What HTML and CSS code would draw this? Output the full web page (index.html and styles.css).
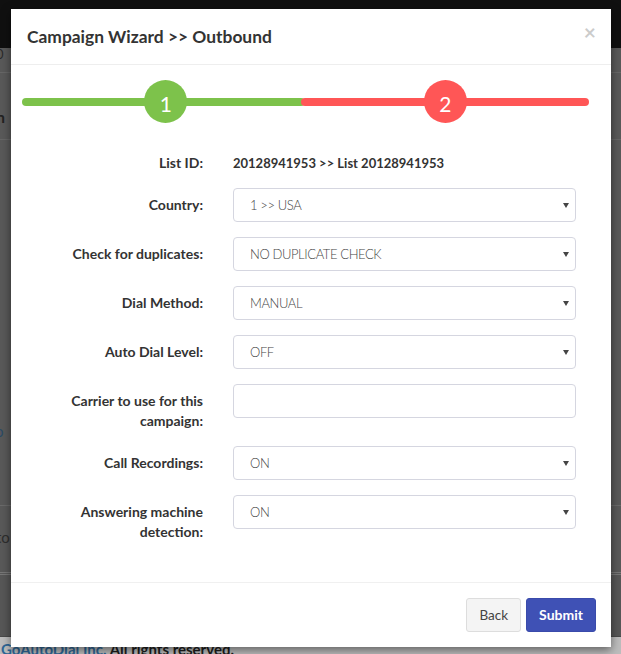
FILE: index.html
```html
<!DOCTYPE html>
<html lang="en">
<head>
<meta charset="utf-8">
<title>Campaign Wizard</title>
<link rel="stylesheet" href="styles.css">
</head>
<body>
<div class="page">
  <div class="topbar"></div>
  <div class="subhead">0</div>
  <div class="title-row"><span class="frag-bold">n</span></div>
  <div class="content"><span class="frag-link">o</span></div>
  <div class="table-foot"><span class="frag-text">to</span></div>
  <div class="pager"></div>
  <div class="site-footer"><span class="brand">GoAutoDial Inc.</span> All rights reserved.</div>
</div>

<div class="modal">
  <div class="modal-header">
    <h4 class="modal-title">Campaign Wizard &gt;&gt; Outbound</h4>
    <button class="close" type="button">×</button>
  </div>
  <div class="modal-body">
    <div class="stepper">
      <div class="track"><span class="track-done"></span><span class="track-todo"></span></div>
      <div class="steps">
        <span class="step step-done">1</span>
        <span class="step step-todo">2</span>
      </div>
    </div>
    <div class="form">
      <div class="label label-static">List ID:</div>
      <div class="value-static">20128941953 &gt;&gt; List 20128941953</div>

      <div class="label">Country:</div>
      <div class="select-wrap"><select class="control"><option>1 &gt;&gt; USA</option></select></div>

      <div class="label">Check for duplicates:</div>
      <div class="select-wrap"><select class="control"><option>NO DUPLICATE CHECK</option></select></div>

      <div class="label">Dial Method:</div>
      <div class="select-wrap"><select class="control"><option>MANUAL</option></select></div>

      <div class="label">Auto Dial Level:</div>
      <div class="select-wrap"><select class="control"><option>OFF</option></select></div>

      <div class="label">Carrier to use for this campaign:</div>
      <div><input class="control" type="text"></div>

      <div class="label">Call Recordings:</div>
      <div class="select-wrap"><select class="control"><option>ON</option></select></div>

      <div class="label">Answering machine detection:</div>
      <div class="select-wrap"><select class="control"><option>ON</option></select></div>
    </div>
  </div>
  <div class="modal-footer">
    <button class="btn btn-back" type="button">Back</button>
    <button class="btn btn-submit" type="button">Submit</button>
  </div>
</div>
</body>
</html>
```

FILE: styles.css
```css
* { box-sizing: border-box; }
html, body { margin: 0; height: 100%; }
body {
  font-family: Lato, "Liberation Sans", sans-serif;
  font-size: 14px;
  color: #333;
  background: #595959;
  overflow: hidden;
  position: relative;
}

/* dimmed page behind the dialog */
.page { display: flex; flex-direction: column; height: 654px; }
.topbar { flex: none; height: 48px; background: #101010; }
.subhead {
  flex: none; height: 25px; border-bottom: 1px solid #666;
  color: #2a2a2a; font-size: 13px; line-height: 10px; padding-top: 1px; margin-left: -4px;
}
.title-row {
  flex: none; height: 67px; border-bottom: 1px solid #666;
  padding-top: 34px; margin-left: -4px;
}
.frag-bold { font-weight: 700; font-size: 16px; color: #222; }
.content { flex: none; height: 366px; border-bottom: 1px solid #6a6a6a; padding-top: 282px; margin-left: -5px; }
.frag-link { color: #2b4a66; font-size: 15px; }
.table-foot { flex: none; height: 69px; border-bottom: 3px double #777; padding-top: 22px; margin-left: -4px; }
.frag-text { color: #2e2e2e; font-size: 15px; }
.pager { flex: none; height: 62px; background: #575757; border-bottom: 1px solid #4a4a4a; }
.site-footer {
  flex: 1; background: #bdbdbd; color: #1e1e1e; font-weight: 700; font-size: 15px;
  line-height: 16px; padding-top: 4px; padding-left: 1px; white-space: nowrap;
}
.brand { color: #2f6797; }

/* dialog */
.modal {
  position: absolute; top: 9px; left: 11px; width: 600px;
  background: #fff; box-shadow: 0 3px 9px rgba(0, 0, 0, .5);
}
.modal-header {
  display: flex; justify-content: space-between; align-items: flex-start;
  padding: 15px; border-bottom: 1px solid #eee;
}
.modal-title { margin: 0; font-size: 17.4px; font-weight: 700; line-height: 25px; color: #333; padding-left: 1px; }
.close {
  border: 0; background: none; padding: 0; margin-top: -3px;
  font-family: inherit; font-size: 21px; font-weight: 700; line-height: 1; color: #000; opacity: .2;
}

.modal-body { padding: 15px 11px 40px; }

.stepper { display: grid; height: 43px; margin-right: 11px; }
.stepper > * { grid-area: 1 / 1; }
.track { align-self: center; display: flex; height: 8px; }
.track-done { flex: 0 0 283px; background: #7dc24b; border-radius: 4px; }
.track-todo { flex: 1; background: #ff5656; border-radius: 4px; margin-left: -4px; }
.steps { display: flex; justify-content: space-around; padding: 0 4px; }
.step {
  width: 43px; height: 43px; border-radius: 50%;
  display: flex; align-items: center; justify-content: center;
  color: #fff; font-size: 21px; padding-top: 3px;
}
.step-done { background: #7dc24b; }
.step-todo { background: #ff5656; }

.form {
  display: grid; grid-template-columns: 181px 343px;
  column-gap: 30px; row-gap: 15px; margin-top: 30px;
}
.label { text-align: right; font-weight: 700; padding-top: 7px; line-height: 20px; color: #333; }
.label-static { padding-top: 0; }
.value-static { font-weight: 700; font-size: 13px; line-height: 20px; color: #333; }
.control {
  display: block; width: 100%; height: 34px;
  border: 1px solid #d5d6e0; border-radius: 4px;
  padding: 6px 12px 6px 16px;
  font-family: inherit; font-size: 13px; font-weight: 300; letter-spacing: -0.4px;
  color: #454545; background: #fff;
  appearance: none; -webkit-appearance: none; outline: none;
}
.select-wrap { position: relative; }
.select-wrap::after {
  content: ""; position: absolute; right: 7px; top: 15px;
  border-left: 3px solid transparent; border-right: 3px solid transparent;
  border-top: 5px solid #444;
}

.modal-footer {
  display: flex; justify-content: flex-end; gap: 5px;
  padding: 15px; border-top: 1px solid #f0f0f0;
}
.btn {
  height: 34px; padding: 6px 12px; line-height: 20px;
  font-family: inherit; font-size: 14px; border-radius: 3px; border: 1px solid transparent;
}
.btn-back { background: #f4f4f4; border-color: #ddd; color: #444; font-size: 13.5px; }
.btn-submit { background: #3f51b5; border-color: #3a4bab; color: #fff; font-weight: 700; }
```
